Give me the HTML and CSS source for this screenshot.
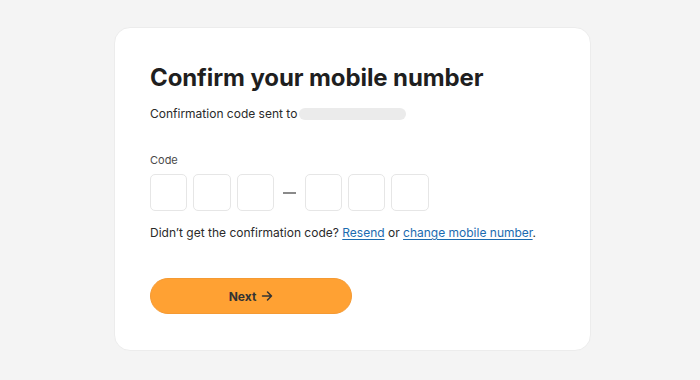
FILE: index.html
```html
<!DOCTYPE html>
<html lang="en">
<head>
<meta charset="utf-8">
<title>Confirm your mobile number</title>
<link rel="stylesheet" href="styles.css">
</head>
<body>
<main class="card">
  <h1 class="title">Confirm your mobile number</h1>
  <p class="subtitle">Confirmation code sent to <span class="masked"></span></p>
  <label class="label" for="c1">Code</label>
  <div class="code">
    <input id="c1" class="digit" type="text" maxlength="1">
    <input class="digit" type="text" maxlength="1">
    <input class="digit" type="text" maxlength="1">
    <span class="dash"></span>
    <input class="digit" type="text" maxlength="1">
    <input class="digit" type="text" maxlength="1">
    <input class="digit" type="text" maxlength="1">
  </div>
  <p class="resend">Didn’t get the confirmation code? <a href="#">Resend</a> or <a href="#">change mobile number</a>.</p>
  <button class="next" type="button">Next
    <svg class="arrow" width="12" height="12" viewBox="0 0 12 12" fill="none" stroke="currentColor" stroke-width="1.5" stroke-linecap="round" stroke-linejoin="round"><path d="M1.5 6h9M6.5 2l4 4-4 4"/></svg>
  </button>
</main>
</body>
</html>
```
FILE: styles.css
```css
* { box-sizing: border-box; }
html, body { margin: 0; padding: 0; }
body {
  background: #f4f4f4;
  font-family: Inter, "Noto Sans", sans-serif;
  color: #222;
  width: 700px;
  height: 380px;
  overflow: hidden;
  padding: 27px 0 0 114px;
}
.card {
  width: 477px;
  height: 324px;
  background: #fff;
  border: 1px solid #ececec;
  border-radius: 16px;
  padding: 35px 35px 0 35px;
  display: flex;
  flex-direction: column;
  align-items: flex-start;
}
.title {
  margin: 0;
  font-size: 24px;
  line-height: 30px;
  font-weight: 700;
  color: #1f1f1f;
  letter-spacing: -0.1px;
}
.subtitle {
  margin: 11px 0 0;
  font-size: 12px;
  line-height: 20px;
  color: #2a2a2a;
  display: flex;
  align-items: center;
}
.masked {
  display: inline-block;
  width: 107px;
  height: 12px;
  border-radius: 6px;
  background: #ebebeb;
  margin-left: 2px;
}
.label {
  margin-top: 28px;
  font-size: 11px;
  line-height: 16px;
  color: #4a4a4a;
}
.code {
  margin-top: 6px;
  display: flex;
  align-items: center;
  gap: 6px;
}
.digit {
  width: 37.3px;
  height: 37px;
  border: 1px solid #e6e6e6;
  border-radius: 5px;
  background: #fff;
  padding: 0;
  margin: 0;
  font: inherit;
  font-size: 16px;
  text-align: center;
  outline: none;
}
.dash {
  width: 13px;
  height: 1.5px;
  background: #8a8a8a;
  margin: 1px 3px 0;
}
.resend {
  margin: 12px 0 0;
  font-size: 12px;
  line-height: 20px;
  color: #2a2a2a;
  white-space: nowrap;
}
.resend a {
  color: #1c6bb0;
  text-decoration: underline;
  text-underline-offset: 2px;
}
.next {
  margin-top: 35px;
  width: 202px;
  height: 36px;
  border: 1px solid #f59a33;
  border-radius: 18px;
  background: #ffa133;
  color: #333;
  font-family: Inter, "Noto Sans", sans-serif;
  font-size: 12px;
  font-weight: 700;
  display: flex;
  align-items: center;
  justify-content: center;
  gap: 5px;
  padding: 0;
  cursor: pointer;
}
.arrow { display: block; }
```
